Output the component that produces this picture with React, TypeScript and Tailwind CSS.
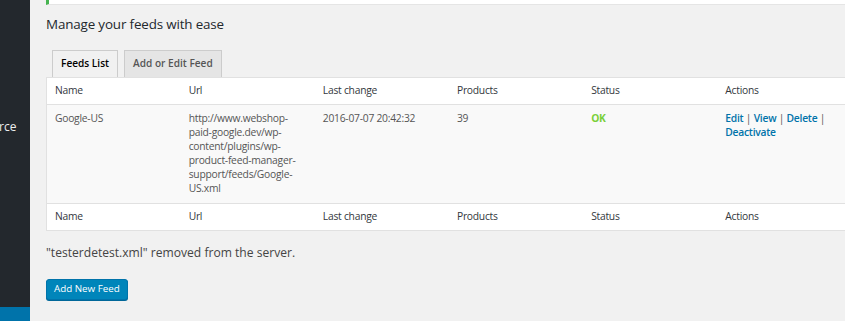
import React from 'react';

const columns = ['Name', 'Url', 'Last change', 'Products', 'Status', 'Actions'];

const LabelRow: React.FC<{ top?: boolean }> = ({ top }) => (
  <tr className="bg-white">
    {columns.map((c) => (
      <th
        key={c}
        className={`h-[27px] px-[8px] text-left align-middle text-[10.3px] tracking-[-0.25px] font-normal text-[#32373c] border-[#e1e1e1] ${
          top ? 'border-b' : 'border-t'
        }`}
      >
        {c}
      </th>
    ))}
  </tr>
);

export default function App() {
  return (
    <div
      className="flex h-[321px] w-[845px] overflow-hidden bg-[#f1f1f1]"
      style={{ fontFamily: '"Open Sans", "Noto Sans", sans-serif' }}
    >
      {/* admin sidebar */}
      <div className="flex w-[30px] shrink-0 flex-col bg-[#23282d]">
        <div className="mt-[118px] -ml-[1px] text-[12px] leading-[18px] text-[#eee]">rce</div>
        <div className="flex-1" />
        <div className="h-[14px] bg-[#0073aa]" />
      </div>

      <div className="flex min-w-0 flex-1 flex-col pl-[16px]">
        {/* previous notice, cut off at the top */}
        <div className="h-[5px] w-[820px] border-b border-l-[3px] border-[#e5e5e5] border-l-[#46b450] bg-white" />

        <h1 className="mt-[9px] text-[13.4px] leading-[20px] tracking-[-0.15px] text-[#23282d]">
          Manage your feeds with ease
        </h1>

        <div className="mt-[16px] flex gap-[6px] pl-[6px]">
          <div className="flex h-[27px] items-center border border-b-0 border-[#ccc] bg-[#f1f1f1] px-[8px] text-[10.1px] font-semibold text-[#000]">
            Feeds List
          </div>
          <div className="flex h-[27px] items-center border border-b-0 border-[#ccc] bg-[#e5e5e5] px-[8px] text-[10.1px] font-semibold text-[#555]">
            Add or Edit Feed
          </div>
        </div>

        <table className="w-[806px] shrink-0 table-fixed border-collapse border border-[#e1e1e1]">
          <thead>
            <LabelRow top />
          </thead>
          <tbody>
            <tr className="bg-[#f9f9f9] align-top text-[10.3px] tracking-[-0.25px] leading-[14px] text-[#555]">
              <td className="px-[8px] pt-[6px] pb-[8px]">Google-US</td>
              <td className="px-[8px] pt-[6px] pb-[8px] break-words">
                http://www.webshop-paid-google.dev/wp-content/plugins/wp-product-feed-manager-support/feeds/Google-US.xml
              </td>
              <td className="px-[8px] pt-[6px] pb-[8px]">2016-07-07 20:42:32</td>
              <td className="px-[8px] pt-[6px] pb-[8px]">39</td>
              <td className="px-[8px] pt-[6px] pb-[8px] font-bold text-[#7ad03a]">OK</td>
              <td className="px-[8px] pt-[6px] pb-[8px] font-semibold text-[#0073aa]">
                <span>Edit</span> <span className="font-normal text-[#555]">|</span> <span>View</span>{' '}
                <span className="font-normal text-[#555]">|</span> <span>Delete</span>{' '}
                <span className="font-normal text-[#555]">|</span> <span>Deactivate</span>
              </td>
            </tr>
          </tbody>
          <tfoot>
            <LabelRow />
          </tfoot>
        </table>

        <p className="mt-[12px] text-[12.1px] leading-[20px] text-[#444]">"testerdetest.xml" removed from the server.</p>

        <div className="mt-[11px]">
          <button className="h-[21px] rounded-[3px] border border-[#0073aa] bg-[#0085ba] px-[7px] text-[9.8px] leading-[18px] text-white shadow-[0_1px_0_#006799]">
            Add New Feed
          </button>
        </div>
      </div>
    </div>
  );
}
